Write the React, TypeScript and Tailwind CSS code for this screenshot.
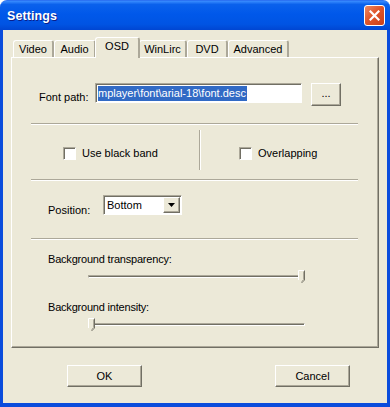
import React from "react";

const raised =
  "border-t border-l border-white border-r border-b border-r-[#716F64] border-b-[#716F64] shadow-[inset_-1px_-1px_0_#ACA899]";
const sunken =
  "border-t border-l border-[#ACA899] border-r border-b border-r-white border-b-white shadow-[inset_1px_1px_0_#716F64]";

const Separator = () => (
  <div className="ml-[19px] w-[327px] h-[2px] border-t border-[#ACA899] border-b border-b-white" />
);

const Tab = ({ label, width, active }: { label: string; width: string; active?: boolean }) => (
  <div
    className={`${width} flex items-center justify-center rounded-t-[3px] border-t border-l border-white border-r-2 border-r-[#ACA899] bg-[#ECE9D8] ${
      active ? "h-[21px] relative z-10 -mb-[1px] pb-[3px] -mx-[1px]" : "h-[17px]"
    }`}
  >
    {label}
  </div>
);

const Checkbox = ({ label }: { label: string }) => (
  <div className="flex items-center gap-[6px]">
    <div className={`w-[13px] h-[13px] bg-white ${sunken}`} />
    <span>{label}</span>
  </div>
);

const Thumb = () => (
  <svg width="8" height="14" viewBox="0 0 8 14" className="block">
    <path d="M0.5 0.5 H6.5 V10 L3.5 13 L0.5 10 Z" fill="#ECE9D8" />
    <path d="M0.5 10 V0.5 H6.5" stroke="#fff" fill="none" />
    <path d="M6.5 0.5 V10 L3.5 13" stroke="#716F64" fill="none" />
    <path d="M5.5 1.5 V9.6 L3.5 11.6" stroke="#ACA899" fill="none" />
  </svg>
);

const Slider = ({ at }: { at: "start" | "end" }) => (
  <div className="relative ml-[57px] w-[218px] h-[15px]">
    <div className={`absolute left-0 right-[1px] top-[5px] h-[3px] bg-[#716F64] ${sunken} shadow-none`} />
    <div className={`absolute top-0 ${at === "start" ? "left-0" : "right-0"}`}>
      <Thumb />
    </div>
  </div>
);

export default function App() {
  return (
    <div className="w-[390px] h-[407px] bg-white font-['Liberation_Sans',Arial,sans-serif] text-[11px] text-black leading-[13px]">
      <div className="w-full h-full flex flex-col">
        {/* title bar */}
        <div className="h-[30px] shrink-0 rounded-t-[7px] bg-[linear-gradient(to_bottom,#3A8DFF_0%,#0A61EC_12%,#0058EA_45%,#0054E3_80%,#0046D2_100%)] flex items-center pl-[7px] pr-[5px] border-t border-[#2C73F3]">
          <span className="text-white font-bold text-[12.5px] tracking-[0.1px] [text-shadow:1px_1px_0_#0A1E8A] mt-[1px]">
            Settings
          </span>
          <div className="ml-auto w-[21px] h-[21px] rounded-[3px] border border-white bg-[linear-gradient(135deg,#EC8A64_0%,#E0562B_45%,#C9401A_100%)] flex items-center justify-center">
            <svg width="11" height="11" viewBox="0 0 11 11">
              <path d="M1.5 1.5 L9.5 9.5 M9.5 1.5 L1.5 9.5" stroke="#fff" strokeWidth="2.2" strokeLinecap="square" />
            </svg>
          </div>
        </div>

        {/* body */}
        <div className="flex-1 flex flex-col bg-[#ECE9D8] border-l-[3px] border-r-[3px] border-b-[4px] border-[#0A4CDC] px-[8px] pt-[7px]">
          <div className="flex items-end pl-[2px] h-[20px]">
            <Tab label="Video" width="w-[41px]" />
            <Tab label="Audio" width="w-[42px]" />
            <Tab label="OSD" width="w-[45px]" active />
            <Tab label="WinLirc" width="w-[48px]" />
            <Tab label="DVD" width="w-[41px]" />
            <Tab label="Advanced" width="w-[61px]" />
          </div>

          <div className="w-[368px] h-[291px] flex flex-col border-t border-l border-white border-r border-b border-r-[#716F64] border-b-[#716F64] shadow-[inset_-1px_-1px_0_#ACA899]">
            {/* font path */}
            <div className="flex items-start mt-[25px] ml-[27px]">
              <span className="w-[56px] mt-[8px]">Font path:</span>
              <div className={`w-[207px] h-[20px] bg-white pl-[2px] pt-[2px] ${sunken}`}>
                <span className="inline-block bg-[#316AC5] text-white leading-[15px] pr-[1px]">
                  mplayer\font\arial-18\font.desc
                </span>
              </div>
              <div className={`ml-[9px] w-[30px] h-[23px] flex items-center justify-center pb-[2px] ${raised}`}>
                ...
              </div>
            </div>

            <div className="mt-[17px]">
              <Separator />
            </div>

            {/* checkboxes */}
            <div className="ml-[19px] w-[327px] h-[54px] flex">
              <div className="w-[168px] pl-[32px] flex items-center pt-[3px]">
                <Checkbox label="Use black band" />
              </div>
              <div className="w-[2px] h-[40px] mt-[5px] border-l border-[#ACA899] border-r border-r-white" />
              <div className="pl-[38px] flex items-center pt-[3px]">
                <Checkbox label="Overlapping" />
              </div>
            </div>

            <Separator />

            {/* position */}
            <div className="flex items-start mt-[14px] ml-[36px]">
              <span className="w-[55px] mt-[9px]">Position:</span>
              <div className={`w-[79px] h-[20px] bg-white flex ${sunken}`}>
                <span className="pl-[3px] pt-[4px] leading-[11px] flex-1">Bottom</span>
                <div className={`w-[17px] h-[16px] mt-[1px] mr-[1px] bg-[#ECE9D8] flex items-center justify-center ${raised}`}>
                  <svg width="7" height="4" viewBox="0 0 7 4">
                    <path d="M0 0 H7 L3.5 4 Z" fill="#000" />
                  </svg>
                </div>
              </div>
            </div>

            <div className="mt-[21px]">
              <Separator />
            </div>

            {/* sliders */}
            <div className="ml-[36px] mt-[13px] tracking-[-0.2px]">Background transparency:</div>
            <div className="mt-[4px] ml-[19px]">
              <Slider at="end" />
            </div>
            <div className="ml-[36px] mt-[16px] tracking-[-0.2px]">Background intensity:</div>
            <div className="mt-[4px] ml-[19px]">
              <Slider at="start" />
            </div>
          </div>

          {/* buttons */}
          <div className="flex mt-[17px] ml-[56px]">
            <div className={`w-[75px] h-[22px] flex items-center justify-center ${raised}`}>OK</div>
            <div className={`ml-[133px] w-[75px] h-[22px] flex items-center justify-center ${raised}`}>Cancel</div>
          </div>
        </div>
      </div>
    </div>
  );
}
